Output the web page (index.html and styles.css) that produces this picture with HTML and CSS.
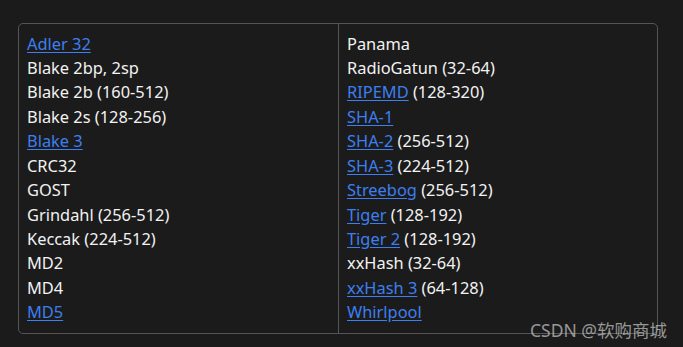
FILE: index.html
```html
<!DOCTYPE html>
<html>
<head>
<meta charset="utf-8">
<link rel="stylesheet" href="styles.css">
</head>
<body>
<div class="page">
  <div class="table">
    <ul class="col">
      <li><a href="#">Adler 32</a></li>
      <li>Blake 2bp, 2sp</li>
      <li>Blake 2b (160-512)</li>
      <li>Blake 2s (128-256)</li>
      <li><a href="#">Blake 3</a></li>
      <li>CRC32</li>
      <li>GOST</li>
      <li>Grindahl (256-512)</li>
      <li>Keccak (224-512)</li>
      <li>MD2</li>
      <li>MD4</li>
      <li><a href="#">MD5</a></li>
    </ul>
    <ul class="col col-right">
      <li>Panama</li>
      <li>RadioGatun (32-64)</li>
      <li><a href="#">RIPEMD</a> (128-320)</li>
      <li><a href="#">SHA-1</a></li>
      <li><a href="#">SHA-2</a> (256-512)</li>
      <li><a href="#">SHA-3</a> (224-512)</li>
      <li><a href="#">Streebog</a> (256-512)</li>
      <li><a href="#">Tiger</a> (128-192)</li>
      <li><a href="#">Tiger 2</a> (128-192)</li>
      <li>xxHash (32-64)</li>
      <li><a href="#">xxHash 3</a> (64-128)</li>
      <li><a href="#">Whirlpool</a></li>
    </ul>
  </div>
  <div class="watermark">CSDN @软购商城</div>
</div>
</body>
</html>
```
FILE: styles.css
```css
html, body {
  margin: 0;
  padding: 0;
  background: #1b1b1b;
}
.page {
  position: relative;
  width: 683px;
  height: 347px;
  padding: 23px 0 0 18px;
  box-sizing: border-box;
  font-family: "Segoe UI", "Noto Sans", "Open Sans", sans-serif;
  font-size: 16.4px;
  color: #f2f2f2;
}
.table {
  width: 640px;
  height: 311px;
  box-sizing: border-box;
  border: 1px solid #555;
  border-radius: 5px;
  display: grid;
  grid-template-columns: 319px 1fr;
}
.col {
  list-style: none;
  margin: 0;
  padding: 7.5px 0 0 8px;
}
.col-right {
  border-left: 1px solid #555;
}
.col li {
  height: 24.45px;
  line-height: 24.45px;
  white-space: nowrap;
}
.col a {
  color: #3d7ff0;
  text-decoration: underline;
  text-underline-offset: 2px;
}
.watermark {
  position: absolute;
  left: 530px;
  top: 317px;
  font-family: "Noto Sans", "Noto Sans CJK SC", sans-serif;
  font-size: 17.5px;
  color: rgba(200, 200, 200, 0.72);
  white-space: nowrap;
}
```
